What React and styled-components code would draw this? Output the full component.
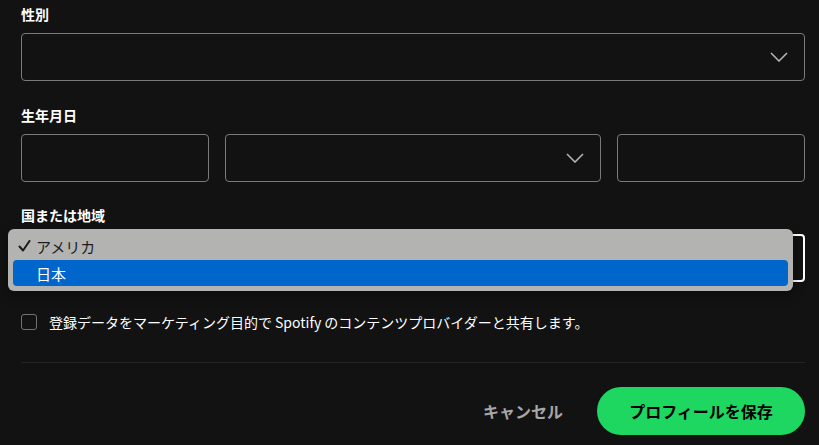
import React from "react";
import styled, { createGlobalStyle } from "styled-components";

const Global = createGlobalStyle`
  html, body { margin: 0; padding: 0; background: #121212; }
  body { font-family: "Noto Sans CJK JP", "Noto Sans", "Liberation Sans", sans-serif; color: #fff; }
  * { box-sizing: border-box; }
`;

const Page = styled.div`
  width: 819px;
  height: 445px;
  overflow: hidden;
  padding: 4px 14px 0 21px;
  display: flex;
  flex-direction: column;
`;

const Field = styled.div`
  position: relative;
  display: flex;
  flex-direction: column;
  gap: 9px;
  margin-top: ${(p) => p.$mt || 0}px;
`;

const Label = styled.div`
  font-size: 14px;
  font-weight: 700;
  line-height: 20px;
  color: #fff;
`;

const Box = styled.div`
  height: 48px;
  border: ${(p) => (p.$focused ? "2px solid #fff" : "1px solid #7a7a7a")};
  border-radius: 4px;
  background: #121212;
  display: flex;
  align-items: center;
  justify-content: flex-end;
  padding-right: ${(p) => (p.$focused ? 15 : 16)}px;
`;

const DateRow = styled.div`
  display: grid;
  grid-template-columns: 1fr 2fr 1fr;
  gap: 16px;
`;

const Popup = styled.div`
  position: absolute;
  top: 24px;
  left: -13px;
  width: 785px;
  height: 62px;
  background: #b3b3b1;
  border-radius: 6px;
  padding: 4px 5px 5px;
  display: flex;
  flex-direction: column;
  gap: 1px;
  box-shadow: 0 4px 12px rgba(0, 0, 0, 0.4);
  z-index: 2;
`;

const Option = styled.div`
  height: 26px;
  display: flex;
  align-items: center;
  padding-left: 5px;
  border-radius: 4px;
  font-size: 15px;
  color: ${(p) => (p.$active ? "#fff" : "#1c1c1c")};
  background: ${(p) => (p.$active ? "#0066cc" : "transparent")};
`;

const Check = styled.span`
  width: 18px;
  display: flex;
  align-items: center;
`;

const ConsentRow = styled.label`
  margin-top: 32px;
  display: flex;
  align-items: center;
  gap: 12px;
  height: 16px;
  font-size: 14px;
  color: #fff;
`;

const CheckBox = styled.span`
  width: 16px;
  height: 16px;
  border: 1px solid #727272;
  border-radius: 3px;
  flex: none;
`;

const Divider = styled.hr`
  margin: 32px 0 0;
  border: none;
  border-top: 1px solid #242424;
`;

const Actions = styled.div`
  margin-top: 24px;
  display: flex;
  justify-content: flex-end;
  align-items: center;
  gap: 34px;
`;

const TextButton = styled.button`
  background: none;
  border: none;
  padding: 0;
  font-family: inherit;
  font-size: 16px;
  font-weight: 700;
  color: #a7a7a7;
`;

const SaveButton = styled.button`
  height: 48px;
  width: 208px;
  border: none;
  border-radius: 24px;
  background: #1ed760;
  color: #000;
  font-family: inherit;
  font-size: 16px;
  font-weight: 700;
`;

const Chevron = () => (
  <svg width="18" height="10" viewBox="0 0 18 10" fill="none">
    <path d="M1 1l8 8 8-8" stroke="#b3b3b3" strokeWidth="1.6" />
  </svg>
);

const Tick = () => (
  <svg width="13" height="12" viewBox="0 0 13 12" fill="none">
    <path d="M1.5 6.5l3.5 4L11.5 1" stroke="#1c1c1c" strokeWidth="2" strokeLinecap="round" strokeLinejoin="round" />
  </svg>
);

export default function App() {
  return (
    <>
      <Global />
      <Page>
        <Field>
          <Label>性別</Label>
          <Box>
            <Chevron />
          </Box>
        </Field>
        <Field $mt={24}>
          <Label>生年月日</Label>
          <DateRow>
            <Box />
            <Box>
              <Chevron />
            </Box>
            <Box />
          </DateRow>
        </Field>
        <Field $mt={23}>
          <Label>国または地域</Label>
          <Box $focused />
          <Popup>
            <Option>
              <Check>
                <Tick />
              </Check>
              アメリカ
            </Option>
            <Option $active>
              <Check />
              日本
            </Option>
          </Popup>
        </Field>
        <ConsentRow>
          <CheckBox />
          登録データをマーケティング目的で Spotify のコンテンツプロバイダーと共有します。
        </ConsentRow>
        <Divider />
        <Actions>
          <TextButton>キャンセル</TextButton>
          <SaveButton>プロフィールを保存</SaveButton>
        </Actions>
      </Page>
    </>
  );
}
